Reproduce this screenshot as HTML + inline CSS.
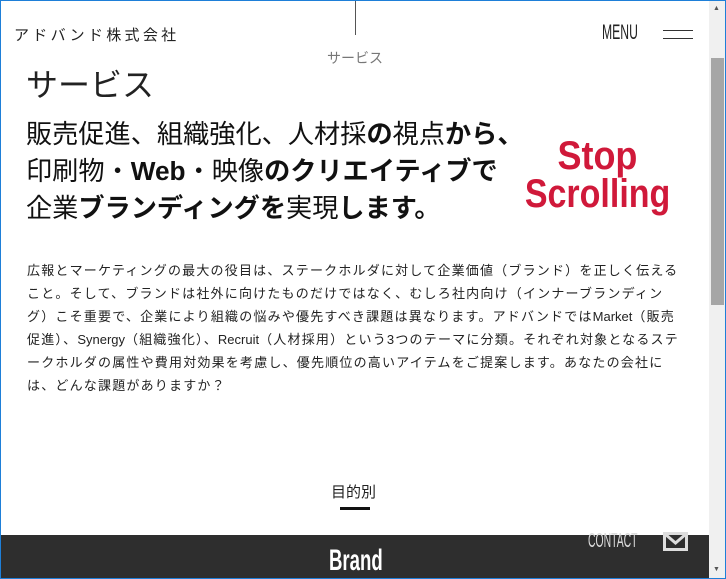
<!DOCTYPE html>
<html><head><meta charset="utf-8"><style>
*{margin:0;padding:0;box-sizing:border-box}
html,body{width:726px;height:579px;overflow:hidden;background:#fff;font-family:"Liberation Sans","Noto Sans CJK JP",sans-serif;color:#222}
.frame{position:absolute;left:0;top:0;width:726px;height:579px;border:1px solid #1e7fd8;}
.sb{position:absolute;left:709px;top:1px;width:16px;height:577px;background:#f0f0f0}
.thumb{position:absolute;left:711px;top:58px;width:13px;height:247px;background:#a6a6a6}
.abs{position:absolute;white-space:nowrap}
.l{letter-spacing:0}
</style></head><body>
<div class="abs" style="left:355px;top:0;width:1px;height:35px;background:#555"></div>
<div class="abs" style="left:14px;top:24px;font-size:15px;letter-spacing:3.3px;color:#222">アドバンド株式会社</div>
<div class="abs" style="left:602px;top:21px;font-size:21px;transform:scaleX(.58);transform-origin:left;color:#222">MENU</div>
<div class="abs" style="left:663px;top:30px;width:30px;height:1px;background:#333"></div>
<div class="abs" style="left:663px;top:38px;width:30px;height:1px;background:#333"></div>
<div class="abs" style="left:327px;top:48px;font-size:14px;color:#777">サービス</div>
<div class="abs" style="left:26px;top:60px;font-size:32px;color:#222">サービス</div>
<div class="abs" style="left:26px;top:116px;font-size:26.2px;line-height:37px;color:#111">販売促進、組織強化、人材採<b>の</b>視点<b>から、</b><br>印刷物・<b>Web</b>・映像<b>のクリエイティブで</b><br>企業<b>ブランディングを</b>実現<b>します。</b></div>
<div class="abs" style="left:512px;top:137px;font-size:40px;line-height:38px;font-weight:bold;color:#d0193a;text-align:center;width:170px"><span style="display:inline-block;transform:scaleX(.9)">Stop</span><br><span style="display:inline-block;transform:scaleX(.85)">Scrolling</span></div>
<div class="abs" style="left:27px;top:259px;width:655px;white-space:normal;font-size:13px;line-height:23px;letter-spacing:1.2px;color:#222">広報とマーケティングの最大の役目は、ステークホルダに対して企業価値（ブランド）を正しく伝えること。そして、ブランドは社外に向けたものだけではなく、むしろ社内向け（インナーブランディング）こそ重要で、企業により組織の悩みや優先すべき課題は異なります。アドバンドでは<span class="l">Market</span>（販売促進）、<span class="l">Synergy</span>（組織強化）、<span class="l">Recruit</span>（人材採用）という3つのテーマに分類。それぞれ対象となるステークホルダの属性や費用対効果を考慮し、優先順位の高いアイテムをご提案します。あなたの会社には、どんな課題がありますか？</div>
<div class="abs" style="left:331px;top:481px;font-size:15px;color:#222">目的別</div>
<div class="abs" style="left:340px;top:507px;width:30px;height:3px;background:#111"></div>
<div class="abs" style="left:1px;top:535px;width:708px;height:43px;background:#2e2e2e"></div>
<div class="abs" style="left:588px;top:530px;font-size:20px;color:#ddd;transform:scaleX(.52);transform-origin:left">CONTACT</div>
<svg class="abs" style="left:663px;top:532px" width="25" height="19" viewBox="0 0 25 19"><rect x="1.5" y="1.5" width="22" height="16" fill="none" stroke="#ddd" stroke-width="3"/><path d="M2 2 L12.5 11 L23 2" fill="none" stroke="#ddd" stroke-width="3"/></svg>
<div class="abs" style="left:329px;top:544px;font-size:30px;font-weight:bold;color:#fff;transform:scaleX(.62);transform-origin:left">Brand</div>
<div class="sb"></div><div class="thumb"></div>
<div class="abs" style="left:713px;top:5px;font-size:7px;color:#555">▲</div>
<div class="abs" style="left:713px;top:566px;font-size:7px;color:#555">▼</div>
<div class="frame"></div>
</body></html>
